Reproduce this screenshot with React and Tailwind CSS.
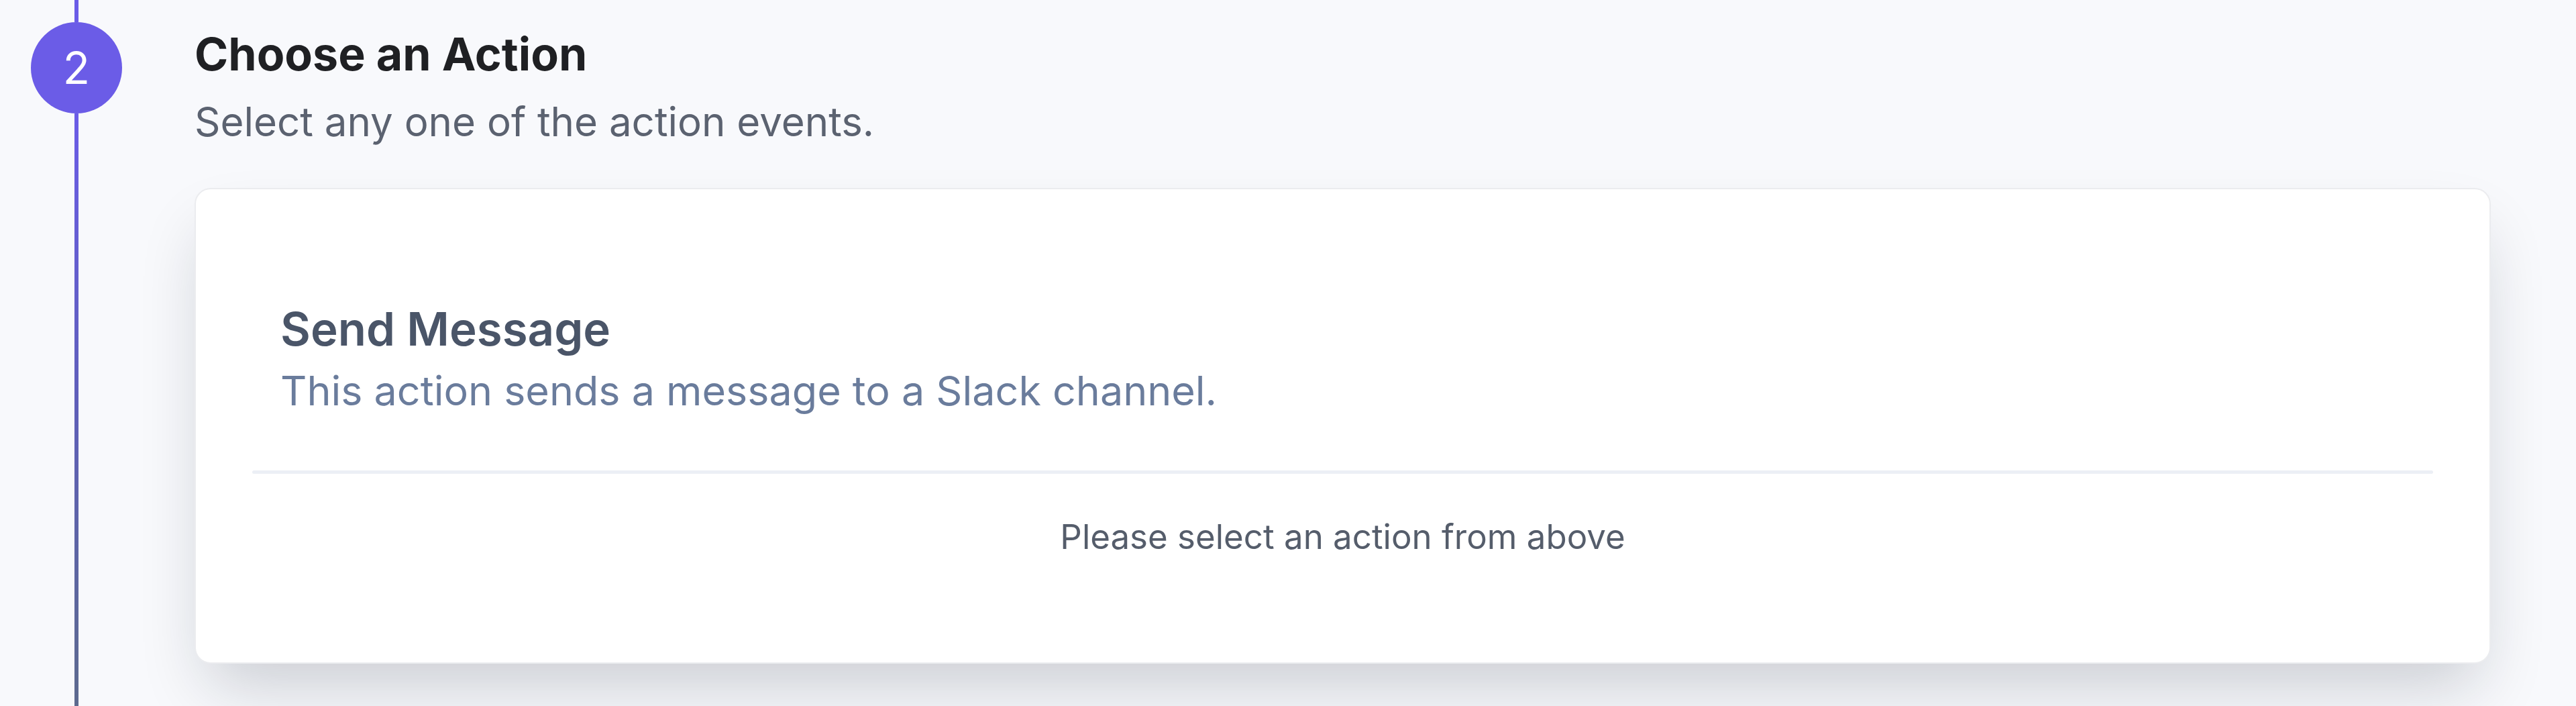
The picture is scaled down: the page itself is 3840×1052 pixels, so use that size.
const font = { fontFamily: 'Inter, "Noto Sans", sans-serif' };

function StepMarker({ n }) {
  return (
    <div className="w-[228px] shrink-0 flex flex-col items-center">
      <div className="w-[6px] h-[33px] bg-[#6b5ce7]" />
      <div className="w-[136px] h-[136px] rounded-full bg-[#6b5ce7] flex items-center justify-center text-white text-[66px] leading-none font-normal">
        {n}
      </div>
      <div className="w-[6px] flex-1 bg-gradient-to-b from-[#6b5ce7] via-[#5f5fb8] to-[#5d6a8e]" />
    </div>
  );
}

export default function App() {
  return (
    <div className="min-h-screen h-[1052px] bg-[#f8f9fc] flex overflow-hidden" style={font}>
      <StepMarker n={2} />
      <div className="flex-1 pl-[62px] pr-[127px] pt-[46px] flex flex-col">
        <h1 className="text-[68px] leading-none font-bold text-[#1f2023]">Choose an Action</h1>
        <p className="mt-[37px] text-[60px] leading-none text-[#5b6270]">Select any one of the action events.</p>

        <div className="mt-[69px] bg-white border-2 border-[#ebecef] rounded-[24px] shadow-[0_50px_100px_-20px_rgba(15,23,42,0.2)] px-[84px] pt-[174px] pb-[162px]">
          <div className="pl-[42px]">
            <h2 className="text-[69px] leading-none font-semibold text-[#4a5568]">Send Message</h2>
            <p className="mt-[27px] text-[61px] leading-none text-[#6a7c9c]">This action sends a message to a Slack channel.</p>
          </div>
          <div className="mt-[88px] h-[5px] bg-[#eceff5] rounded-full" />
          <p className="mt-[68px] text-center text-[51px] leading-none text-[#555d6b]">Please select an action from above</p>
        </div>
      </div>
    </div>
  );
}
